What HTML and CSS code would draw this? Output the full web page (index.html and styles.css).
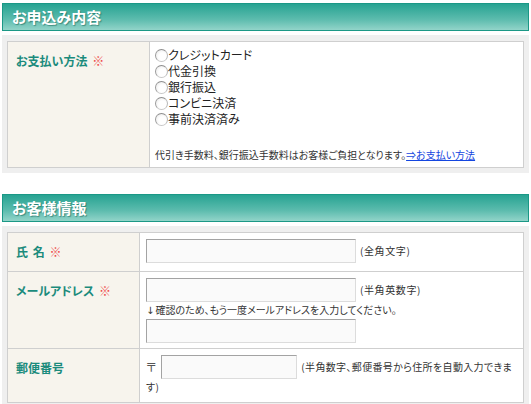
FILE: index.html
```html
<!DOCTYPE html>
<html lang="ja">
<head>
<meta charset="utf-8">
<title>お申込み</title>
<link rel="stylesheet" href="styles.css">
</head>
<body>
<div class="page">
  <section class="sec">
    <h2 class="sec-title">お申込み内容</h2>
    <div class="sec-body">
      <table class="form form-pay">
        <tr>
          <th>お支払い方法 <span class="req">※</span></th>
          <td>
            <ul class="radios">
              <li><label><input type="radio" name="pay">クレジットカード</label></li>
              <li><label><input type="radio" name="pay">代金引換</label></li>
              <li><label><input type="radio" name="pay">銀行振込</label></li>
              <li><label><input type="radio" name="pay">コンビニ決済</label></li>
              <li><label><input type="radio" name="pay">事前決済済み</label></li>
            </ul>
            <p class="note">代引き手数料、銀行振込手数料はお客様ご負担となります。<a href="#">⇒お支払い方法</a></p>
          </td>
        </tr>
      </table>
    </div>
  </section>

  <section class="sec">
    <h2 class="sec-title">お客様情報</h2>
    <div class="sec-body">
      <table class="form form-cust">
        <tr>
          <th>氏 名 <span class="req">※</span></th>
          <td>
            <div class="field"><input type="text" class="txt txt-l"><span class="hint">(全角文字)</span></div>
          </td>
        </tr>
        <tr>
          <th>メールアドレス <span class="req">※</span></th>
          <td class="mail">
            <div class="field"><input type="text" class="txt txt-l"><span class="hint">(半角英数字)</span></div>
            <p class="sub"><span class="arrow">↓</span>確認のため、もう一度メールアドレスを入力してください。</p>
            <div class="field"><input type="text" class="txt txt-l"></div>
          </td>
        </tr>
        <tr>
          <th>郵便番号</th>
          <td class="zip">
            <span class="zip-mark">〒</span><input type="text" class="txt txt-s"><span class="hint">(半角数字、郵便番号から住所を自動入力できます)</span>
          </td>
        </tr>
      </table>
    </div>
  </section>
</div>
</body>
</html>
```

FILE: styles.css
```css
* { box-sizing: border-box; }

body {
  margin: 0;
  padding: 3px 0 0 2px;
  background: #fff;
  color: #333;
  font-family: "Noto Sans CJK JP", "Noto Sans", sans-serif;
  font-feature-settings: "palt";
  font-size: 12px;
}

.page { width: 527px; }

.sec + .sec { margin-top: 21px; }

.sec-title {
  margin: 0;
  height: 28px;
  padding-left: 9px;
  border: 1px solid #1b9886;
  background: linear-gradient(#27a392, #5dbcae 60%, #92d4c9);
  color: #fff;
  font-size: 15px;
  font-weight: bold;
  line-height: 26px;
  text-shadow: 1px 1px 1px rgba(0, 70, 60, 0.45);
}

.sec-body {
  margin-top: 4px;
  padding: 6px 5px 5px;
  background: #efefef;
}

.form {
  width: 100%;
  border-collapse: collapse;
  table-layout: fixed;
  background: #fff;
}

.form th,
.form td {
  border: 1px solid #cfcfcf;
  vertical-align: top;
}

.form th {
  padding: 12px 8px;
  background: #f7f4ed;
  color: #1b8b7c;
  font-size: 12px;
  font-weight: bold;
  line-height: 14px;
  text-align: left;
  word-spacing: 2px;
}

.form-pay th { width: 142px; }
.form-cust th { width: 132px; }

.req { color: #ef4b4b; font-weight: normal; }

.form-pay td { padding: 5px 5px 5px 5px; }

.radios { list-style: none; margin: 0; padding: 0; }
.radios li { line-height: 16px; font-size: 12px; color: #222; }
.radios label { display: flex; align-items: center; }
.radios input {
  appearance: none;
  -webkit-appearance: none;
  width: 13px;
  height: 13px;
  margin: 0;
  border: 1px solid;
  border-color: #8e8e8e #b8b8b8 #c8c8c8 #9a9a9a;
  border-radius: 50%;
  background: radial-gradient(circle at 60% 60%, #fff 40%, #e6e6e6 100%);
}

.note {
  margin: 21px 0 0;
  font-size: 10px;
  line-height: 14px;
  color: #333;
}
.note a { color: #1446e0; text-decoration: underline; }

.form-cust td { padding: 6px 6px 7px; font-size: 10px; line-height: 14px; }
.form-cust td.mail { padding-bottom: 5px; }

.field { display: flex; align-items: center; gap: 4px; }

.txt {
  height: 24px;
  margin: 0;
  padding: 2px 4px;
  border: 1px solid;
  border-color: #a3a3a3 #dcdcdc #dcdcdc #a3a3a3;
  background: #fafafa;
  font: inherit;
}
.txt-l { width: 210px; }
.txt-s { width: 136px; vertical-align: middle; }

.hint { font-size: 10px; color: #333; letter-spacing: 0.6px; }

.sub { margin: 0; line-height: 16px; font-size: 10px; color: #333; }
.arrow { font-family: "DejaVu Sans", sans-serif; color: #333; margin-right: 1px; }

.form-cust td.zip { padding: 6px 6px 8px; line-height: 14px; }
.zip-mark { display: inline-block; margin-right: 5px; font-size: 12px; line-height: 12px; color: #555; vertical-align: middle; }
.zip .hint { margin-left: 4px; vertical-align: middle; letter-spacing: 0.35px; }
```
